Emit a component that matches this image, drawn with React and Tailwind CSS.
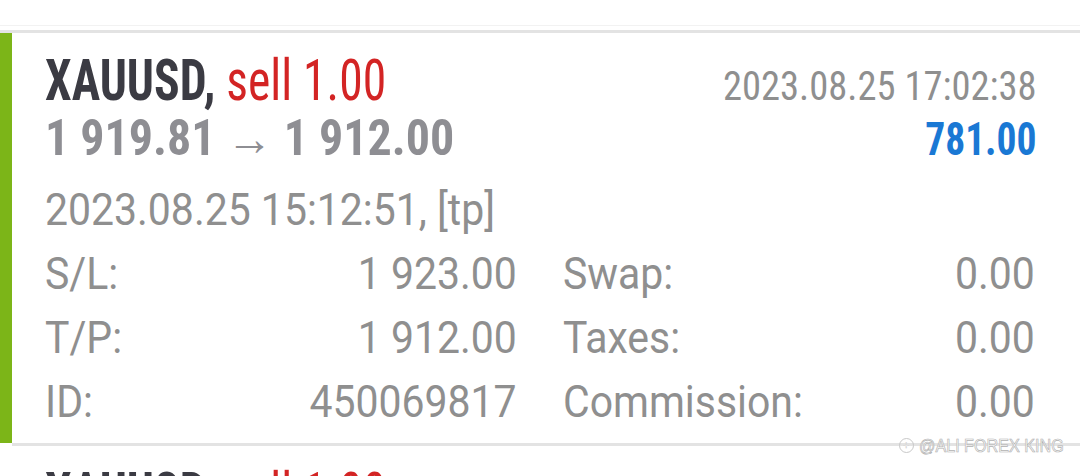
import React from 'react';

const FONT = "font-['Roboto',sans-serif]";
const COND = "font-stretch-[75%]";

const ROWS = [
  ['S/L:', '1 923.00', 'Swap:', '0.00'],
  ['T/P:', '1 912.00', 'Taxes:', '0.00'],
  ['ID:', '450069817', 'Commission:', '0.00'],
];

function TitleLine({ time }) {
  return (
    <div className={`${FONT} flex items-baseline justify-between pt-[16px]`}>
      <div className={`${COND} text-[57px] leading-[64px] whitespace-nowrap origin-left scale-x-[0.835]`}>
        <span className="font-bold text-[#3b3b43]">XAUUSD,</span>{' '}
        <span className="text-[#d32424]">sell 1.00</span>
      </div>
      {time && (
        <div className={`${COND} text-[41px] leading-[64px] text-[#8f8f8f] whitespace-nowrap origin-right scale-x-[0.94] -mr-[2px]`}>{time}</div>
      )}
    </div>
  );
}

export default function App() {
  return (
    <div className="relative w-[1080px] h-[476px] overflow-hidden bg-white">
      {/* tail of previous order */}
      <div className="h-[26px] border-b border-[#f2f2f2]" />
      <div className="h-[4px]" />
      <div className="h-[3px] bg-[#e3e3e3]" />

      {/* selected order */}
      <div className="flex">
        <div className="w-[12px] bg-[#7cb518]" />
        <div className={`${FONT} flex-1 pl-[33px] pr-[45px] pb-[9px]`}>
          <TitleLine time="2023.08.25 17:02:38" />

          <div className="flex items-baseline justify-between">
            <div className={`${COND} text-[50px] leading-[41px] font-bold text-[#8e8e93] whitespace-nowrap origin-left scale-x-[0.96]`}>
              1 919.81 <span className="font-normal font-stretch-normal text-[48px] leading-[41px]">→</span> 1 912.00
            </div>
            <div className={`${COND} text-[46px] leading-[41px] font-bold text-[#1a78d4] origin-right scale-x-[0.86] -mr-[2px]`}>781.00</div>
          </div>

          <div className="mt-[18px] text-[45px] leading-[64px] text-[#8f8f8f] whitespace-nowrap origin-left scale-x-[0.91]">
            2023.08.25 15:12:51, [tp]
          </div>

          <div className="grid grid-cols-2 gap-x-[46px] text-[45px] leading-[64px] text-[#8f8f8f]">
            {ROWS.map(([l1, v1, l2, v2]) => (
              <React.Fragment key={l1}>
                <div className="flex justify-between whitespace-nowrap">
                  <span className="inline-block origin-left scale-x-[0.91]">{l1}</span>
                  <span className="inline-block origin-right scale-x-[0.91]">{v1}</span>
                </div>
                <div className="flex justify-between whitespace-nowrap">
                  <span className="inline-block origin-left scale-x-[0.91]">{l2}</span>
                  <span className="inline-block origin-right scale-x-[0.91]">{v2}</span>
                </div>
              </React.Fragment>
            ))}
          </div>
        </div>
      </div>
      <div className="ml-[12px] h-[3px] bg-[#e3e3e3]" />

      {/* next order, cut off */}
      <div className="pl-[45px] pr-[45px]">
        <TitleLine />
      </div>

      {/* watermark */}
      <div className="absolute right-[13px] top-[436px] flex items-center gap-[5px] font-['Liberation_Sans',sans-serif] text-[19px] leading-none text-white [-webkit-text-stroke:0.7px_#b0b0b0]">
        <span className="w-[15px] h-[15px] rounded-full border border-[#c8c8c8] flex items-center justify-center text-[10px] [-webkit-text-stroke:0.4px_#c8c8c8]">+</span>
        <span className="inline-block origin-left scale-x-[0.85] -mr-[22px]">@ALI FOREX KING</span>
      </div>
    </div>
  );
}
